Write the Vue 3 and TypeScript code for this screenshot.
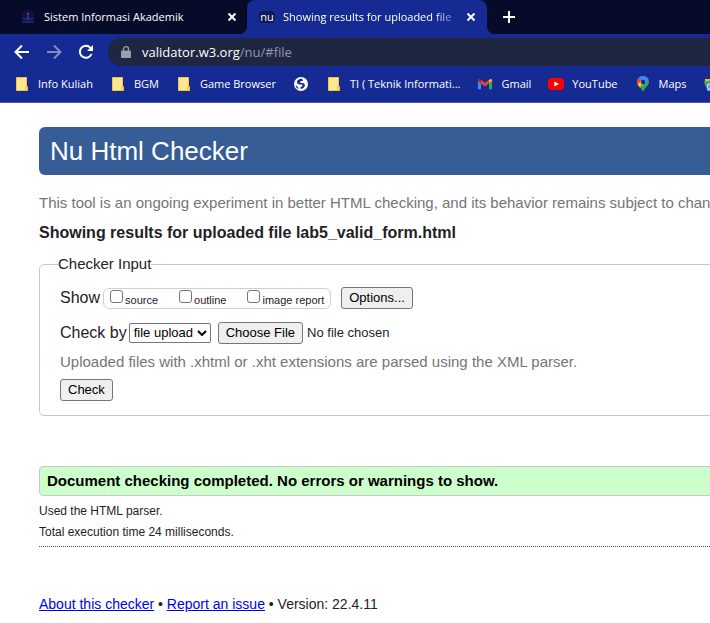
<script setup lang="ts">
import { ref } from 'vue'

interface Bookmark {
  label: string
  icon: 'folder' | 'globe' | 'gmail' | 'youtube' | 'maps' | 'translate'
}

const bookmarks: Bookmark[] = [
  { label: 'Info Kuliah', icon: 'folder' },
  { label: 'BGM', icon: 'folder' },
  { label: 'Game Browser', icon: 'folder' },
  { label: '', icon: 'globe' },
  { label: 'TI ( Teknik Informati...', icon: 'folder' },
  { label: 'Gmail', icon: 'gmail' },
  { label: 'YouTube', icon: 'youtube' },
  { label: 'Maps', icon: 'maps' },
  { label: '', icon: 'translate' },
]

const showOptions = ref([
  { id: 'source', label: 'source', checked: false },
  { id: 'outline', label: 'outline', checked: false },
  { id: 'report', label: 'image report', checked: false },
])

const method = ref('file upload')
</script>

<template>
  <div class="browser">
    <header class="chrome">
      <div class="tabs">
        <div class="tab">
          <svg class="favicon" viewBox="0 0 16 16">
            <path d="M2 3 8 1l6 2v7l-2 4H4l-2-4z" fill="#0c1150" />
            <path d="M3 9h10v2H3zM2 12h12v2H2z" fill="#1c2472" />
            <path d="M8 3 9 5 8 7 7 5z" fill="#d02a2a" />
            <path d="M7 7h2v4H7z" fill="#3a3560" />
          </svg>
          <span class="tab-title">Sistem Informasi Akademik</span>
          <button class="icon-button close" type="button" aria-label="Close tab">
            <svg viewBox="0 0 10 10"><path d="m1.500 1.500 7 7m0-7-7 7" /></svg>
          </button>
        </div>
        <div class="tab active">
          <span class="nu">nu</span>
          <span class="tab-title fade">Showing results for uploaded file</span>
          <button class="icon-button close" type="button" aria-label="Close tab">
            <svg viewBox="0 0 10 10"><path d="m1.500 1.500 7 7m0-7-7 7" /></svg>
          </button>
        </div>
        <button class="icon-button add" type="button" aria-label="New tab">
          <svg viewBox="0 0 12 12"><path d="M6 0v12M0 6h12" /></svg>
        </button>
      </div>

      <div class="toolbar">
        <div class="navs">
          <button class="icon-button nav" type="button" aria-label="Back">
            <svg viewBox="0 0 16 16"><path d="M15 8H2m6-6.500L1.500 8 8 14.500" /></svg>
          </button>
          <button class="icon-button nav dim" type="button" aria-label="Forward">
            <svg viewBox="0 0 16 16"><path d="M1 8h13M8 1.500 14.500 8 8 14.500" /></svg>
          </button>
          <button class="icon-button nav" type="button" aria-label="Reload">
            <svg viewBox="0 0 16 16">
              <path d="M13.500 10A6 6 0 1 1 12.400 3.800L14 5.500" />
              <path d="M15 1v6H9z" fill="#fff" stroke="none" />
            </svg>
          </button>
        </div>
        <div class="address">
          <svg class="lock" viewBox="0 0 10 12">
            <path d="M1 4.500h8q1 0 1 1V11q0 1-1 1H1q-1 0-1-1V5.500q0-1 1-1z" fill="#9a9fae" />
            <path d="M2.500 5V3a2.500 2.300 0 0 1 5 0v2" fill="none" stroke="#9a9fae" stroke-width="1.300" />
          </svg>
          <span>validator.w3.org<span class="path">/nu/#file</span></span>
        </div>
      </div>

      <nav class="bookmarks">
        <a v-for="(b, i) in bookmarks" :key="i" href="#" class="bookmark">
          <svg v-if="b.icon === 'folder'" viewBox="0 0 16 16">
            <path d="M2.500 1.500h10v9h1v4h-11z" fill="#ffe693" stroke="#eec33f" />
            <path d="M11.500 14.500v-3h2v3z" fill="#ffe07a" stroke="#eec33f" />
          </svg>
          <svg v-else-if="b.icon === 'globe'" viewBox="0 0 16 16">
            <circle cx="8" cy="8" r="7" fill="#fff" />
            <path d="M9 2.500Q4 3 4 6q0 2.500 3 2.500h2q1 1 0 2L7.500 11v2q4-.500 4.500-4Q11.500 7 9 7H7.500q-1-1 .500-2H10z" fill="#152b93" />
            <path d="M2.500 9q.500 3 3 4l-.500-2z" fill="#152b93" />
          </svg>
          <svg v-else-if="b.icon === 'gmail'" viewBox="-1 -2 18 16">
            <path d="M0 2.500V11q0 1 1 1h2.500V5z" fill="#4285f4" />
            <path d="M16 2.500V11q0 1-1 1h-2.500V5z" fill="#34a853" />
            <path d="M12.500 1.500V5L16 2.500V1.500Q15-.500 13 .800z" fill="#fbbc04" />
            <path d="M3.500 1.200 8 4.700l4.500-3.500V5.300L8 8.800 3.500 5.300z" fill="#ea4335" />
            <path d="M0 2.500 3.500 5.300V1.200L3 .800Q1-.500 0 1.500z" fill="#c5221f" />
          </svg>
          <svg v-else-if="b.icon === 'youtube'" viewBox="0 0 16 16">
            <rect y="2" width="16" height="12" rx="3" fill="#f00" />
            <path d="m6.300 5.400 4.700 2.600-4.700 2.600z" fill="#fff" />
          </svg>
          <svg v-else-if="b.icon === 'maps'" viewBox="0 0 12 16">
            <path d="M6 0A6 6 0 0 1 12 6C12 9.500 8 11 6 16 4 11 0 9.500 0 6A6 6 0 0 1 6 0z" fill="#34a853" />
            <path d="M1.500 2A6 6 0 0 1 11.500 3.600L6 10z" fill="#4285f4" />
            <path d="M1.500 2A6 6 0 0 0 .500 8.500L5 5z" fill="#ea4335" />
            <path d="M.500 8.500Q1.500 10.300 3 11.500L8 5.500 4.500 4z" fill="#fbbc04" />
            <circle cx="6" cy="6" r="2.200" fill="#152b93" />
          </svg>
          <svg v-else viewBox="0 0 16 16">
            <path d="M1 3h5l2-2 2 2h5v3H1z" fill="#fbbc04" />
            <path d="M0 5h5l3-3 2 3-3 5H1z" fill="#34a853" />
            <path d="M2 6h13v9H3z" fill="#5b96f5" />
            <path d="M7.500 9A2.500 2.500 0 1 0 8 12H6" fill="none" stroke="#fff" />
          </svg>
          <span v-if="b.label">{{ b.label }}</span>
        </a>
      </nav>
    </header>

    <main class="page">
      <h1>Nu Html Checker</h1>
      <p class="intro">
        This tool is an ongoing experiment in better HTML checking, and its behavior remains subject to change
      </p>
      <h2>Showing results for uploaded file lab5_valid_form.html</h2>

      <form @submit.prevent>
        <fieldset class="checker">
          <legend>Checker Input</legend>
          <div class="row">
            <span>Show</span>
            <span class="checks">
              <label v-for="o in showOptions" :key="o.id">
                <input v-model="o.checked" type="checkbox" /><span>{{ o.label }}</span>
              </label>
            </span>
            <button class="btn" type="button">Options...</button>
          </div>
          <div class="row by">
            <label for="method">Check by</label>
            <span class="picker">
              <select id="method" v-model="method">
                <option>file upload</option>
                <option>address</option>
                <option>text input</option>
              </select>
              <svg viewBox="0 0 10 6"><path d="m1 1 4 4 4-4" /></svg>
            </span>
            <input class="file" type="file" aria-label="File to check" />
          </div>
          <p class="hint">Uploaded files with .xhtml or .xht extensions are parsed using the XML parser.</p>
          <button class="btn" type="submit">Check</button>
        </fieldset>
      </form>

      <p class="success">Document checking completed. No errors or warnings to show.</p>
      <p class="stat">Used the HTML parser.</p>
      <p class="stat">Total execution time 24 milliseconds.</p>
      <hr />
      <footer>
        <a href="#">About this checker</a> • <a href="#">Report an issue</a> • Version: 22.4.11
      </footer>
    </main>
  </div>
</template>

<style>
body {
  background: #fff;
  overflow-x: hidden;
}
</style>

<style scoped>
.browser {
  overflow: hidden;
  font-family: "Liberation Sans", Arial, sans-serif;
  color: #1f2126;
}
.chrome {
  background: #152b93;
  border-bottom: 1px solid #4455a8;
  color: #fff;
  font: 11px/16px "Open Sans", "Noto Sans", sans-serif;
  white-space: nowrap;
}
.tabs {
  display: flex;
  height: 34px;
  background: #060b29;
}
.tab {
  display: flex;
  align-items: center;
  box-sizing: border-box;
  flex: none;
  width: 247px;
  padding: 0 10px 0 20px;
}
.tab.active {
  position: relative;
  width: 240px;
  padding: 0 11px 0 12px;
  border-radius: 8px 8px 0 0;
  background: #152b93;
}
.tab.active::before,
.tab.active::after {
  content: "";
  position: absolute;
  bottom: 0;
  width: 8px;
  height: 8px;
}
.tab.active::before {
  right: 100%;
  background: radial-gradient(circle at 0 0, transparent 8px, #152b93 8px);
}
.tab.active::after {
  left: 100%;
  background: radial-gradient(circle at 100% 0, transparent 8px, #152b93 8px);
}
.favicon {
  width: 16px;
  height: 16px;
  margin-right: 8px;
}
.nu {
  width: 16px;
  margin-right: 8px;
  border-radius: 4px;
  background: #101a50;
  font-size: 11px;
  line-height: 12px;
  text-align: center;
}
.tab-title {
  flex: 1;
}
.fade {
  mask-image: linear-gradient(to right, #000 82%, transparent 98%);
}
.icon-button {
  display: flex;
  align-items: center;
  justify-content: center;
  flex: none;
  padding: 0;
  border: 0;
  background: none;
}
.icon-button svg {
  width: 100%;
  fill: none;
  stroke: #fff;
  stroke-width: 2;
}
.close {
  width: 10px;
}
.add {
  width: 12px;
  margin-left: 16px;
}
.toolbar {
  display: flex;
  align-items: center;
  gap: 14px;
  padding: 4px 0 0 14px;
}
.navs {
  display: flex;
  gap: 16px;
}
.nav {
  width: 16px;
}
.dim {
  opacity: 0.45;
}
.address {
  display: flex;
  align-items: center;
  flex: 1;
  gap: 11px;
  height: 28px;
  padding-left: 13px;
  border-radius: 14px 0 0 14px;
  background: #1f2642;
  font-size: 13px;
}
.lock {
  width: 10px;
  height: 12px;
}
.path {
  color: #9298aa;
}
.bookmarks {
  display: flex;
  align-items: center;
  height: 36px;
  padding-left: 14px;
  gap: 17px;
}
.bookmark {
  display: flex;
  align-items: center;
  flex: none;
  gap: 8px;
  color: #fff;
  text-decoration: none;
}
.bookmark svg {
  width: 16px;
  height: 16px;
}
.page {
  padding: 24px 0 0 39px;
}
h1 {
  margin: 0;
  padding: 0 11px;
  border-radius: 6px 0 0 6px;
  background: #365d95;
  color: #fff;
  font-size: 26px;
  font-weight: 400;
  line-height: 48px;
}
.intro {
  margin: 18px 0 0;
  color: #757575;
  font-size: 15px;
  line-height: 20px;
  white-space: nowrap;
}
h2 {
  margin: 10px 0 0;
  font-size: 16px;
  line-height: 20px;
}
.checker {
  min-width: 0;
  margin: 11px -8px 0 0;
  padding: 13px 20px 14px;
  border: 1px solid #c8c8c8;
  border-radius: 5px;
  font-size: 16px;
}
legend {
  margin-left: -2px;
  padding: 0;
  font-size: 15px;
  line-height: 20px;
}
.row {
  display: flex;
  align-items: center;
}
.checks {
  display: flex;
  align-items: center;
  box-sizing: border-box;
  gap: 21px;
  height: 21px;
  margin: 0 10px 0 3px;
  padding: 0 6px;
  border: 1px solid #d0d0d0;
  border-radius: 6px;
  font-size: 11px;
}
.checks label {
  display: flex;
  align-items: flex-end;
  gap: 2px;
  height: 17px;
  line-height: 14px;
}
.checks input {
  appearance: none;
  box-sizing: border-box;
  width: 13px;
  height: 13px;
  margin: 0 0 4px;
  border: 1px solid #767676;
  border-radius: 3px;
  background: #fff;
}
.checks input:checked {
  background: #0075ff;
}
.btn,
.file::file-selector-button {
  box-sizing: border-box;
  height: 22px;
  padding: 0 7px;
  border: 1px solid #767676;
  border-radius: 3px;
  background: #efefef;
  color: #000;
  font: 13px/20px "Liberation Sans", Arial, sans-serif;
}
.by {
  margin-top: 13px;
}
.picker {
  position: relative;
  margin: 0 7px 0 2px;
}
.picker select {
  appearance: none;
  display: block;
  box-sizing: border-box;
  height: 20px;
  padding: 0 16px 0 4px;
  border: 1px solid #767676;
  border-radius: 2px;
  background: #fff;
  color: #000;
  font: 13px/18px "Liberation Sans", Arial, sans-serif;
}
.picker svg {
  position: absolute;
  top: 7px;
  right: 4px;
  width: 10px;
  height: 6px;
  fill: none;
  stroke: #000;
  stroke-width: 2;
  pointer-events: none;
}
.file {
  font: 13px/20px "Liberation Sans", Arial, sans-serif;
}
.hint {
  margin: 8px 0 7px;
  color: #757575;
  font-size: 15px;
  line-height: 20px;
}
.success {
  margin: 50px -8px 5px 0;
  padding: 5px 7px;
  border: 1px solid #c8c8c8;
  border-radius: 4px;
  background: #cfc;
  color: #000;
  font-size: 15px;
  font-weight: 700;
  line-height: 18px;
}
.stat {
  margin: 0;
  font-size: 12px;
  line-height: 21px;
}
hr {
  margin: 3px 0 48px;
  border: 0;
  border-top: 1px dotted #555;
}
footer {
  font-size: 14px;
  line-height: 18px;
}
footer a {
  color: #00e;
}
</style>
